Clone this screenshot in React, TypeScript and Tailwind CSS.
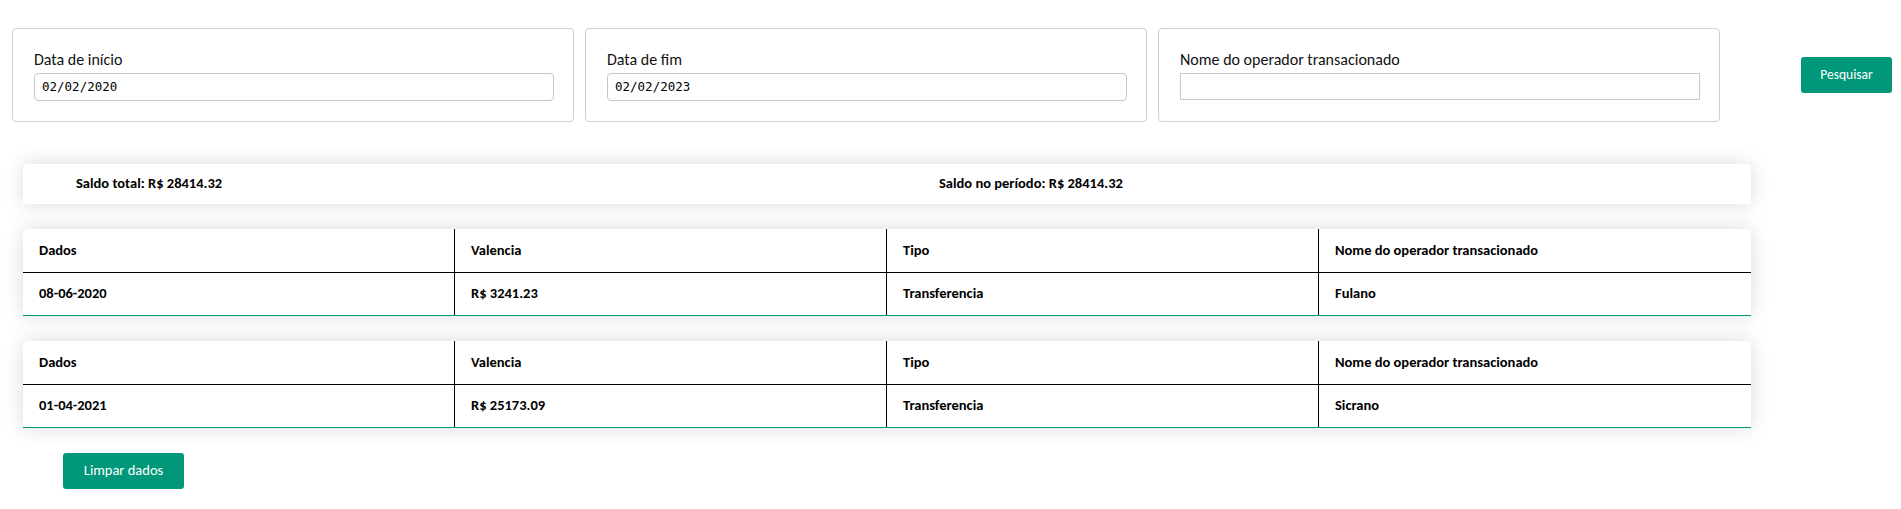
type Row = {
  data: string;
  valor: string;
  tipo: string;
  operador: string;
};

const rows: Row[] = [
  { data: "08-06-2020", valor: "R$ 3241.23", tipo: "Transferencia", operador: "Fulano" },
  { data: "01-04-2021", valor: "R$ 25173.09", tipo: "Transferencia", operador: "Sicrano" },
];

const FilterCard = ({ label, value, square = false }: { label: string; value: string; square?: boolean }) => {
  return (
    <div className="flex h-[94px] w-[562px] flex-col justify-center gap-[3px] rounded-[4px] border border-[#cfcfcf] bg-white pl-[21px]">
      <label className="text-[16px] leading-[20px] text-[#111]">{label}</label>
      <input
        type="text"
        readOnly
        defaultValue={value}
        className={`w-[520px] border border-[#c8c8c8] bg-white pl-[7px] font-['DejaVu_Sans_Mono',monospace] text-[12.5px] text-black outline-none ${
          square ? "h-[27px] rounded-none" : "h-[28px] rounded-[4px]"
        }`}
      />
    </div>
  );
};

const Cell = ({ children, last = false }: { children: React.ReactNode; last?: boolean }) => (
  <div className={`flex items-center pl-[16px] ${last ? "" : "border-r border-black"}`}>{children}</div>
);

const Table = ({ row }: { row: Row }) => {
  return (
    <div className="w-[1728px] overflow-hidden rounded-t-[5px] bg-white text-[14.5px] font-bold text-black shadow-[0_0_20px_rgba(0,0,0,0.15)]">
      <div className="grid h-[44px] grid-cols-4 border-b border-black">
        <Cell>Dados</Cell>
        <Cell>Valencia</Cell>
        <Cell>Tipo</Cell>
        <Cell last>Nome do operador transacionado</Cell>
      </div>
      <div className="grid h-[43px] grid-cols-4 border-b border-[#009879]">
        <Cell>{row.data}</Cell>
        <Cell>{row.valor}</Cell>
        <Cell>{row.tipo}</Cell>
        <Cell last>{row.operador}</Cell>
      </div>
    </div>
  );
};

export default function App() {
  return (
    <div className="min-h-screen bg-white font-['Carlito','Liberation_Sans_Narrow','DejaVu_Sans_Condensed',Lato,sans-serif] text-black">
      <div className="flex items-center justify-between pl-[12px] pr-[9px] pt-[28px]">
        <div className="flex gap-[11px]">
          <FilterCard label="Data de início" value="02/02/2020" />
          <FilterCard label="Data de fim" value="02/02/2023" />
          <FilterCard label="Nome do operador transacionado" value="" square />
        </div>
        <button className="h-[36px] w-[91px] rounded-[3px] bg-[#009879] text-[13.5px] text-white">Pesquisar</button>
      </div>

      <div className="ml-[23px] mt-[42px] flex w-[1728px] flex-col gap-[25px]">
        <div className="grid h-[40px] grid-cols-2 items-center rounded-t-[5px] bg-white text-[14.5px] font-bold shadow-[0_0_20px_rgba(0,0,0,0.15)]">
          <div className="pl-[53px]">Saldo total: R$ 28414.32</div>
          <div className="pl-[52px]">Saldo no período: R$ 28414.32</div>
        </div>
        {rows.map((row) => (
          <Table key={row.data} row={row} />
        ))}
      </div>

      <button className="ml-[63px] mt-[25px] h-[36px] w-[121px] rounded-[3px] bg-[#009879] text-[14.5px] text-white">
        Limpar dados
      </button>
    </div>
  );
}
